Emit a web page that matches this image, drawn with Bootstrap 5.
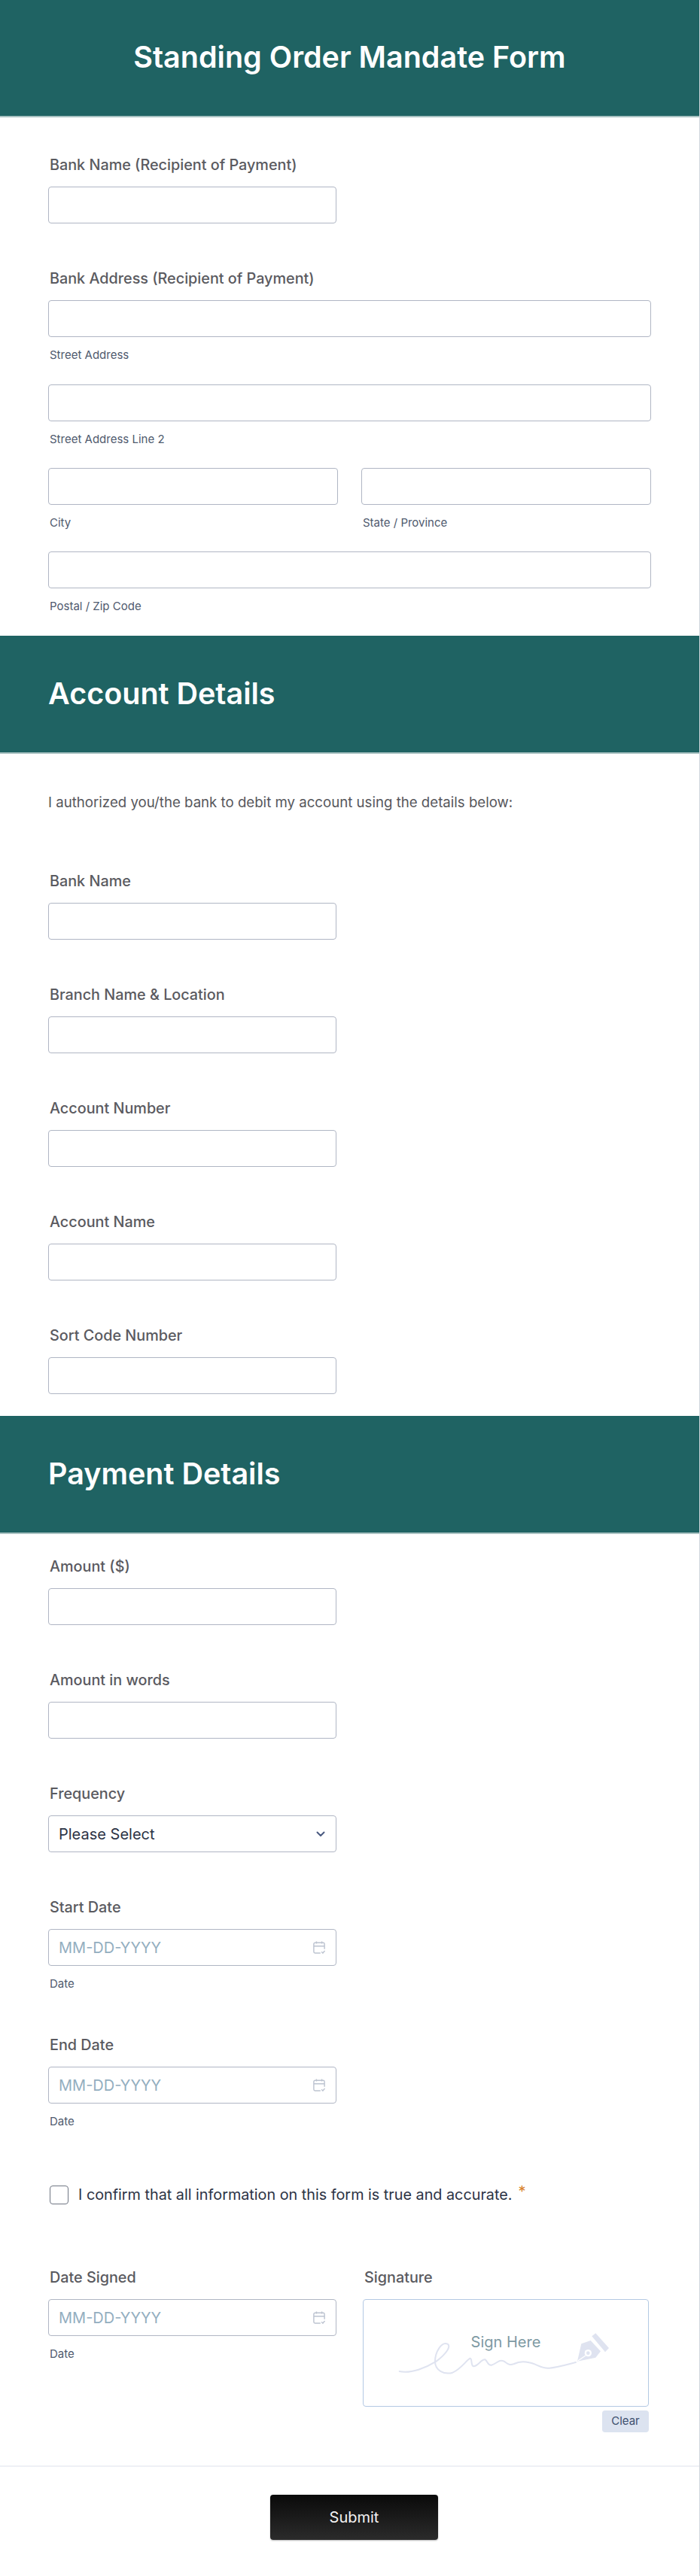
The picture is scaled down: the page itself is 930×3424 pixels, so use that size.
<!DOCTYPE html>
<html lang="en">
<head>
<meta charset="utf-8">
<title>Standing Order Mandate Form</title>
<link href="https://cdn.jsdelivr.net/npm/bootstrap@5.3.0/dist/css/bootstrap.min.css" rel="stylesheet">
<style>
  body { font-family: Inter, "Liberation Sans", sans-serif; background: #fff; color: #2c3345; }
  .form-sheet { width: 930px; height: 3424px; border-right: 1px solid #cfd6dc; }
  .band { background: #1f6363; color: #fff; height: 157px; border-bottom: 2px solid #a9c2c2; padding: 0 64px; }
  .band h1, .band h2 { font-size: 39.5px; font-weight: 600; margin: 0; line-height: 1.2; }
  .band-first { height: 156px; }
  .block { padding: 0 64px; }
  .fld-label { display: block; font-size: 19.8px; font-weight: 500; color: #5a5a60; line-height: 28px; padding-left: 2px; margin-bottom: 15px; }
  .fld { margin-bottom: 59px; }
  .fld-dated { margin-bottom: 57px; }
  .fld-sub { font-size: 15px; color: #4f5a6e; line-height: 20px; padding: 14px 0 0 2px; }
  .addr-row { margin-bottom: 28px; }
  .addr-first { margin-bottom: 29px; }
  .form-control.fld-input, .form-select.fld-input { height: 49px; border: 1px solid #b0b6c4; border-radius: 4px; font-size: 20px; color: #2c3345; box-shadow: none; padding: 0 13px; }
  .form-select.fld-input { background-image: url("data:image/svg+xml,%3csvg xmlns='http://www.w3.org/2000/svg' viewBox='0 0 12 8'%3e%3cpath fill='none' stroke='%234a5a80' stroke-width='2' stroke-linecap='round' stroke-linejoin='round' d='M1.5 1.5 6 6l4.5-4.5'/%3e%3c/svg%3e"); background-size: 12px 8px; background-position: right 14px center; }
  .fld-input::placeholder { color: #93aebf; opacity: 1; }
  .half { width: 383px; }
  .city-gap { gap: 31px; }
  .cal-icon { position: absolute; right: 15px; top: 16px; }
  .intro { font-size: 18.65px; color: #57575c; line-height: 26px; padding: 51px 0 78px; margin: 0; }
  .confirm { padding: 17px 0 0 2px; font-size: 19.8px; color: #2c3345; line-height: 26px; margin-bottom: 83px; }
  .confirm .form-check-input { width: 25px; height: 25px; border: 1px solid #6f7683; border-radius: 4px; margin: 0 13px 0 0; flex: none; }
  .star { color: #d9822b; font-size: 20px; position: relative; top: -4px; margin-left: 8px; }
  .sig-col { width: 380px; margin-left: 35px; }
  .sig-box { position: relative; height: 143px; border: 1px solid #b3c9e3; border-radius: 4px; text-align: center; padding-top: 43px; font-size: 20px; line-height: 26px; color: #7e9aa3; }
  .sig-box svg { position: absolute; left: 0; top: 0; }
  .btn.clear-btn { background: #dce3f0; border: 0; color: #3d4f6e; font-size: 15px; width: 62px; height: 29px; padding: 0; border-radius: 4px; margin-top: 5px; }
  .foot-line { border-top: 2px solid #eef0f6; margin-top: 44px; padding-top: 37px; }
  .btn.submit-btn { width: 223px; height: 60px; background: linear-gradient(#0a0a0a, #2b2b2b); border: 0; color: #f2f2f2; font-size: 20px; border-radius: 4px; box-shadow: 0 1px 2px rgba(0,0,0,.3); margin-left: 12px; }
</style>
</head>
<body>
<form class="form-sheet">

  <div class="band band-first d-flex align-items-center justify-content-center">
    <h1>Standing Order Mandate Form</h1>
  </div>

  <div class="block">
    <div class="fld" style="padding-top:49px">
      <label class="fld-label">Bank Name (Recipient of Payment)</label>
      <input class="form-control fld-input half" type="text">
    </div>

    <label class="fld-label">Bank Address (Recipient of Payment)</label>
    <div class="addr-first">
      <input class="form-control fld-input" type="text">
      <div class="fld-sub">Street Address</div>
    </div>
    <div class="addr-row">
      <input class="form-control fld-input" type="text">
      <div class="fld-sub">Street Address Line 2</div>
    </div>
    <div class="addr-row d-flex city-gap">
      <div class="flex-fill">
        <input class="form-control fld-input" type="text">
        <div class="fld-sub">City</div>
      </div>
      <div class="flex-fill">
        <input class="form-control fld-input" type="text">
        <div class="fld-sub">State / Province</div>
      </div>
    </div>
    <div class="addr-first">
      <input class="form-control fld-input" type="text">
      <div class="fld-sub">Postal / Zip Code</div>
    </div>
  </div>

  <div class="band d-flex align-items-center">
    <h2>Account Details</h2>
  </div>

  <div class="block">
    <p class="intro">I authorized you/the bank to debit my account using the details below:</p>
    <div class="fld">
      <label class="fld-label">Bank Name</label>
      <input class="form-control fld-input half" type="text">
    </div>
    <div class="fld">
      <label class="fld-label">Branch Name &amp; Location</label>
      <input class="form-control fld-input half" type="text">
    </div>
    <div class="fld">
      <label class="fld-label">Account Number</label>
      <input class="form-control fld-input half" type="text">
    </div>
    <div class="fld">
      <label class="fld-label">Account Name</label>
      <input class="form-control fld-input half" type="text">
    </div>
    <div class="addr-first">
      <label class="fld-label">Sort Code Number</label>
      <input class="form-control fld-input half" type="text">
    </div>
  </div>

  <div class="band d-flex align-items-center">
    <h2>Payment Details</h2>
  </div>

  <div class="block">
    <div class="fld" style="padding-top:29px">
      <label class="fld-label">Amount ($)</label>
      <input class="form-control fld-input half" type="text">
    </div>
    <div class="fld">
      <label class="fld-label">Amount in words</label>
      <input class="form-control fld-input half" type="text">
    </div>
    <div class="fld">
      <label class="fld-label">Frequency</label>
      <select class="form-select fld-input half">
        <option>Please Select</option>
      </select>
    </div>
    <div class="fld-dated">
      <label class="fld-label">Start Date</label>
      <div class="position-relative half">
        <input class="form-control fld-input" type="text" placeholder="MM-DD-YYYY">
        <svg class="cal-icon" width="16" height="17" viewBox="0 0 18 19" fill="none" stroke="#bcc3d0" stroke-width="1.6"><path d="M11 18H3a2 2 0 0 1-2-2V4.5a2 2 0 0 1 2-2h12a2 2 0 0 1 2 2V12M1 7.5h16M5 .5v3.5M13 .5v3.5"/><path d="m12.5 16 2 2 3-3.5"/></svg>
      </div>
      <div class="fld-sub">Date</div>
    </div>
    <div class="fld-dated">
      <label class="fld-label">End Date</label>
      <div class="position-relative half">
        <input class="form-control fld-input" type="text" placeholder="MM-DD-YYYY">
        <svg class="cal-icon" width="16" height="17" viewBox="0 0 18 19" fill="none" stroke="#bcc3d0" stroke-width="1.6"><path d="M11 18H3a2 2 0 0 1-2-2V4.5a2 2 0 0 1 2-2h12a2 2 0 0 1 2 2V12M1 7.5h16M5 .5v3.5M13 .5v3.5"/><path d="m12.5 16 2 2 3-3.5"/></svg>
      </div>
      <div class="fld-sub">Date</div>
    </div>

    <div class="confirm d-flex align-items-center">
      <input class="form-check-input" type="checkbox">
      <span>I confirm that all information on this form is true and accurate.<span class="star">*</span></span>
    </div>

    <div class="d-flex">
      <div class="half">
        <label class="fld-label">Date Signed</label>
        <div class="position-relative">
          <input class="form-control fld-input" type="text" placeholder="MM-DD-YYYY">
          <svg class="cal-icon" width="16" height="17" viewBox="0 0 18 19" fill="none" stroke="#bcc3d0" stroke-width="1.6"><path d="M11 18H3a2 2 0 0 1-2-2V4.5a2 2 0 0 1 2-2h12a2 2 0 0 1 2 2V12M1 7.5h16M5 .5v3.5M13 .5v3.5"/><path d="m12.5 16 2 2 3-3.5"/></svg>
        </div>
        <div class="fld-sub">Date</div>
      </div>
      <div class="sig-col">
        <label class="fld-label">Signature</label>
        <div class="sig-box">
          <svg width="378" height="141" viewBox="40 50 1134 423" fill="none">
            <path d="M183 335C230 345 290 320 330 295C370 265 390 235 375 226C350 215 325 260 325 295C325 330 360 350 395 340C430 325 450 290 465 283C475 285 465 315 480 315C500 310 510 285 525 288C535 295 535 312 550 310C570 305 580 285 600 295C615 305 620 312 640 305C660 295 680 295 700 300C730 305 750 325 780 322C810 320 850 308 886 299" stroke="#dfe3f0" stroke-width="6" stroke-linecap="round"/>
            <path fill="#dfe3f0" d="M892 295 908 225 945 212 985 255 965 280Z"/>
            <path fill="#dfe3f0" d="M950 195 965 183 1018 242 1003 258Z"/>
            <circle cx="935" cy="262" r="14" fill="#fff"/>
            <circle cx="935" cy="262" r="7" fill="#dfe3f0"/>
            <path d="M894 293 925 272" stroke="#fff" stroke-width="4"/>
          </svg>
          <span class="position-relative">Sign Here</span>
        </div>
        <div class="d-flex justify-content-end">
          <button type="button" class="btn clear-btn">Clear</button>
        </div>
      </div>
    </div>
  </div>

  <div class="foot-line d-flex justify-content-center">
    <button type="button" class="btn submit-btn">Submit</button>
  </div>
</form>
<script src="https://cdn.jsdelivr.net/npm/bootstrap@5.3.0/dist/js/bootstrap.bundle.min.js"></script>
</body>
</html>
